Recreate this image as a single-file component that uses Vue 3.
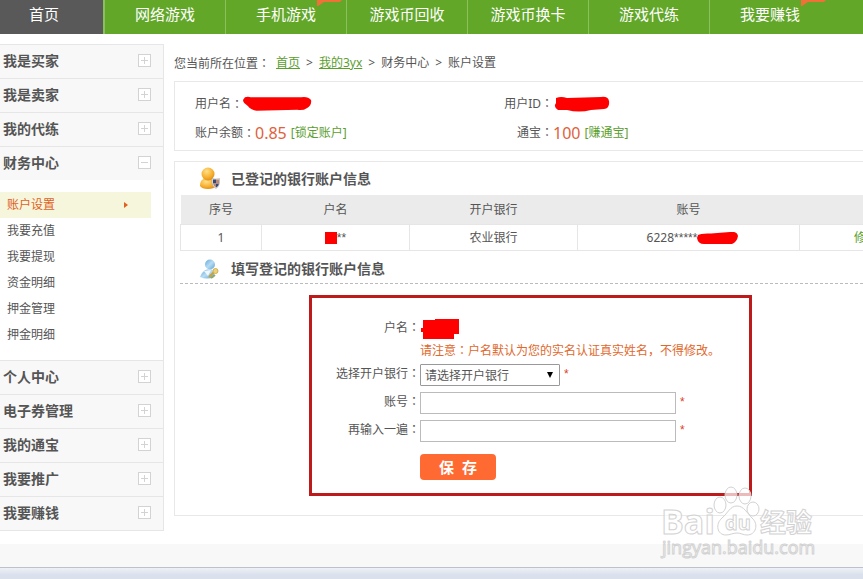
<script setup>
import { ref } from 'vue'

const nav = [
  { name: '网络游戏' },
  { name: '手机游戏', hot: true },
  { name: '游戏币回收' },
  { name: '游戏币换卡' },
  { name: '游戏代练' },
  { name: '我要赚钱', hot: true },
]

const menu = ref([
  { name: '我是买家' },
  { name: '我是卖家' },
  { name: '我的代练' },
  {
    name: '财务中心',
    open: true,
    children: ['账户设置', '我要充值', '我要提现', '资金明细', '押金管理', '押金明细'],
  },
  { name: '个人中心' },
  { name: '电子券管理' },
  { name: '我的通宝' },
  { name: '我要推广' },
  { name: '我要赚钱' },
])
const current = ref('账户设置')

const bank = ref('')
const account = ref('')
const account2 = ref('')
</script>

<template>
  <div class="page">
    <nav class="nav">
      <a href="#" class="nav-home">首页</a>
      <a v-for="n in nav" :key="n.name" href="#" class="nav-item">
        {{ n.name }}
        <svg v-if="n.hot" class="hot" width="25" height="6" viewBox="0 0 25 6">
          <path d="M0 0H25L23 2H7L1 6H0Z" fill="#f0703a" />
        </svg>
      </a>
    </nav>

    <div class="main">
      <aside class="side">
        <div v-for="m in menu" :key="m.name" class="group">
          <button type="button" class="group-title" @click="m.open = !m.open">
            <span>{{ m.name }}</span>
            <svg width="13" height="13" viewBox="0 0 13 13" fill="none" stroke="#d3d3d3">
              <rect x="0.5" y="0.5" width="12" height="12" fill="#fff" />
              <path d="M3 6.5H10" />
              <path v-if="!m.open" d="M6.5 3V10" />
            </svg>
          </button>
          <ul v-if="m.open && m.children" class="sub">
            <li v-for="c in m.children" :key="c">
              <a href="#" :class="{ on: c === current }" @click.prevent="current = c">
                {{ c }}
                <svg v-if="c === current" width="4" height="6" viewBox="0 0 4 6">
                  <path d="M0 0L4 3L0 6Z" fill="#e0601f" />
                </svg>
              </a>
            </li>
          </ul>
        </div>
      </aside>

      <div class="content">
        <div class="crumbs">
          <span>您当前所在位置<span class="colon">：</span></span>
          <a href="#">首页</a>
          <span>&gt;</span>
          <a href="#">我的3yx</a>
          <span>&gt;</span>
          <span>财务中心</span>
          <span>&gt;</span>
          <span>账户设置</span>
        </div>

        <div class="box info">
          <div class="info-left">
            <p>
              用户名<span class="colon">：</span>
              <svg width="69" height="16" viewBox="0 0 71 16">
                <path d="M2 1Q5 0 8 1L60 1Q67 0 70 4Q71 9 66 12Q62 15 56 14L14 15Q8 14 5 10Q0 7 0 4Z" fill="#f00" />
              </svg>
            </p>
            <p>
              账户余额<span class="colon">：</span><strong>0.85</strong>
              <a href="#">[锁定账户]</a>
            </p>
          </div>
          <div class="info-right">
            <p>
              <span class="k">用户ID<span class="colon">：</span></span>
              <svg width="57" height="16" viewBox="0 0 57 16">
                <path d="M3 2Q8 0 14 2L48 1Q55 0 56 5Q57 12 51 13L38 14Q26 17 14 14L5 14Q0 11 3 7Z" fill="#f00" />
              </svg>
            </p>
            <p>
              <span class="k">通宝<span class="colon">：</span></span><strong>100</strong>
              <a href="#">[赚通宝]</a>
            </p>
          </div>
        </div>

        <div class="box panel">
          <h2>
            <svg width="22" height="23" viewBox="0 0 22 23">
              <defs>
                <radialGradient id="gold" cx="0.4" cy="0.3" r="0.8">
                  <stop offset="0" stop-color="#ffe08a" />
                  <stop offset="0.6" stop-color="#f6ae2c" />
                  <stop offset="1" stop-color="#d98512" />
                </radialGradient>
              </defs>
              <path d="M1 19Q1 12 6 11.500H12Q17 13 17 19Q15 22 9 22Q3 22 1 19Z" fill="url(#gold)" />
              <circle cx="9" cy="7" r="6.500" fill="url(#gold)" />
              <path d="M13 11.500Q17 12.500 20.500 11.500V16Q20 20 17 21.500Q13.500 20 13 16Z" fill="#e6e6ea" stroke="#a59b96" stroke-width="0.500" />
              <path d="M14 12.500H17V16.500H14ZM17 16.500H20Q19.500 19.500 17 20.500Z" fill="#38486e" />
              <path d="M17 12.500H20V16.500H17ZM14 16.500H17V20.500Q14.500 19 14 16.500Z" fill="#b98a78" />
            </svg>
            已登记的银行账户信息
          </h2>
          <table>
            <thead>
              <tr>
                <th class="c1">序号</th>
                <th class="c2">户名</th>
                <th class="c3">开户银行</th>
                <th class="c4">账号</th>
                <th></th>
              </tr>
            </thead>
            <tbody>
              <tr>
                <td>1</td>
                <td>
                  <svg width="12" height="12" viewBox="0 0 12 12"><rect width="12" height="12" fill="#f00" /></svg><span class="stars">**</span>
                </td>
                <td>农业银行</td>
                <td class="no">
                  6228<span class="stars">*****</span><svg width="41" height="13" viewBox="0 0 41 13">
                    <path d="M1 3Q4 1 14 1.500L33 0Q40 -1 41 4Q40 10 35 12H7Q1 12 0 6Z" fill="#f00" />
                  </svg>
                </td>
                <td class="op"><a href="#">修改</a></td>
              </tr>
            </tbody>
          </table>

          <h2 class="line">
            <svg width="22" height="23" viewBox="0 0 22 23">
              <defs>
                <linearGradient id="blue" x1="0" y1="0" x2="1" y2="1">
                  <stop offset="0" stop-color="#5fa9dc" />
                  <stop offset="0.5" stop-color="#b8dcf3" />
                  <stop offset="1" stop-color="#5b9fd2" />
                </linearGradient>
              </defs>
              <path d="M1 19Q3 13 8 11.500H13Q16 14 15 19Q8 22 1 19Z" fill="url(#blue)" />
              <circle cx="11" cy="6.500" r="5" fill="url(#blue)" />
              <path d="M5 13L9 18L12 12Z" fill="#eef7fc" />
              <path d="M10 19L15 14" stroke="#c9a23a" stroke-width="2" />
              <circle cx="16.500" cy="13" r="2.500" fill="#ecd27a" stroke="#d3ae50" />
              <path d="M12 20L16 17" stroke="#8fa867" stroke-width="2" />
            </svg>
            填写登记的银行账户信息
          </h2>

          <form class="form" @submit.prevent>
            <span class="label mid">户名<span class="colon">：</span></span>
            <div class="name">
              <svg width="38" height="20" viewBox="0 0 38 20">
                <path d="M2 1H14V0H38V15H33V20H2V13H0V9H2Z" fill="#f00" />
              </svg>
            </div>
            <p class="tip">请注意<span class="colon">：</span>户名默认为您的实名认证真实姓名，不得修改。</p>

            <label for="bank" class="label">选择开户银行<span class="colon">：</span></label>
            <div class="field">
              <div class="select">
                <select id="bank" v-model="bank">
                  <option value="">请选择开户银行</option>
                  <option value="abc">农业银行</option>
                </select>
                <svg width="6" height="6" viewBox="0 0 6 6"><path d="M0 0H6L3 6Z" fill="#000" /></svg>
              </div>
              <em>*</em>
            </div>

            <label for="account" class="label">账号<span class="colon">：</span></label>
            <div class="field">
              <input id="account" v-model="account" type="text">
              <em>*</em>
            </div>

            <label for="account2" class="label">再输入一遍<span class="colon">：</span></label>
            <div class="field">
              <input id="account2" v-model="account2" type="text">
              <em>*</em>
            </div>

            <button type="submit" class="save">保&nbsp; 存</button>
          </form>
        </div>
      </div>
    </div>

    <footer class="foot"></footer>
    <div class="status"></div>

    <svg class="mark" width="160" height="80" viewBox="0 0 160 80">
      <g fill="#fff" fill-opacity="0.7" stroke="#d2d2d2" stroke-width="1">
        <ellipse cx="61" cy="20" rx="6" ry="8" />
        <ellipse cx="72" cy="10" rx="6" ry="8" />
        <ellipse cx="86" cy="11" rx="6" ry="8" />
        <ellipse cx="94" cy="24" rx="6" ry="7" />
        <path d="M78 21C85 21 88 28 93 33C100 39 97 50 88 50C84 50 82 48 78 48C74 48 71 50 67 50C58 50 56 39 63 33C69 28 71 21 78 21Z" />
        <text x="2" y="49" class="latin big">Bai</text>
        <text x="66" y="45" class="latin du">du</text>
        <text x="101" y="47" class="cn">经验</text>
        <text x="3" y="69" class="latin small">jingyan.baidu.com</text>
      </g>
    </svg>
  </div>
</template>

<style>
body {
  margin: 0;
  background: #fff;
}
</style>

<style scoped>
.page {
  position: relative;
  overflow: hidden;
  font: 12px/20px "Noto Sans", "Noto Sans CJK SC", sans-serif;
  color: #555;
}

a {
  color: #5a9e2d;
  text-decoration: none;
}

p, h2, ul {
  margin: 0;
  padding: 0;
}

/* centred colon */
.colon {
  font-family: "Noto Sans CJK TC", sans-serif;
}

.stars {
  font-family: "Liberation Sans", Arial, sans-serif;
}

.nav {
  display: flex;
  height: 34px;
  background: #62a728;
  font-size: 15px;
  line-height: 28px;
}

.nav a {
  color: #fff;
  text-align: center;
  box-sizing: border-box;
}

.nav-home {
  width: 105px;
  padding-right: 15px;
  background: #595959;
  border-right: 2px solid #8bc05f;
}

.nav-item {
  position: relative;
  width: 121px;
  border-right: 1px solid #8bc05f;
}

.nav-item:last-child {
  border-right-color: transparent;
}

.hot {
  position: absolute;
  top: 0;
  left: 91px;
}

.main {
  display: flex;
  align-items: flex-start;
  gap: 10px;
  padding-top: 10px;
}

.side {
  flex: none;
  width: 163px;
  border: 1px solid #e6e6e6;
  border-width: 0 1px 1px 0;
}

.group-title {
  display: flex;
  align-items: center;
  justify-content: space-between;
  width: 100%;
  height: 34px;
  padding: 0 12px 2px 3px;
  border: 0;
  border-top: 1px solid #e6e6e6;
  background: #f8f8f8;
  font: bold 14px/30px "Noto Sans", "Noto Sans CJK SC", sans-serif;
  color: #555;
}

.sub {
  padding: 12px 12px 12px 0;
  list-style: none;
}

.sub a {
  display: flex;
  align-items: center;
  justify-content: space-between;
  padding: 0 23px 0 7px;
  line-height: 26px;
  color: #555;
}

.sub a.on {
  background: #f6f6dc;
  color: #e0601f;
}

.content {
  flex: 1 0 760px;
}

.crumbs {
  display: flex;
  gap: 6px;
  height: 37px;
  line-height: 38px;
}

.crumbs a {
  text-decoration: underline;
}

.box {
  border: 1px solid #e8e8e8;
}

.info {
  display: flex;
  margin-bottom: 10px;
  padding: 7px 20px 3px;
}

.info p {
  display: flex;
  align-items: center;
  height: 29px;
}

.info-left {
  width: 298px;
}

.info-right .k {
  width: 60px;
  text-align: right;
}

.info strong {
  margin-right: 4px;
  font-size: 16px;
  font-weight: normal;
  color: #e0623c;
}

.panel {
  padding: 0 5px 19px;
}

h2 {
  display: flex;
  align-items: center;
  gap: 10px;
  height: 33px;
  padding-left: 19px;
  font-size: 14px;
}

h2.line {
  height: 28px;
  padding-top: 4px;
  border-bottom: 1px dashed #bbb;
}

table {
  width: 100%;
  border-collapse: collapse;
  table-layout: fixed;
  text-align: center;
}

th {
  height: 29px;
  padding: 0;
  background: #ebebeb;
  font-weight: normal;
}

td {
  height: 25px;
  padding: 0;
  border: 1px solid #e6e6e6;
}

td svg {
  vertical-align: middle;
}

td.no {
  padding-left: 8px;
}

td.op {
  padding-left: 54px;
  text-align: left;
}

.c1 { width: 81px; }
.c2 { width: 148px; }
.c3 { width: 168px; }
.c4 { width: 222px; }

.form {
  display: grid;
  grid-template-columns: 108px 1fr;
  row-gap: 6px;
  box-sizing: border-box;
  width: 443px;
  margin: 11px 0 0 129px;
  padding: 18px 0 13px;
  border: 3px solid #bd1a1c;
}

.label {
  line-height: 18px;
  text-align: right;
}

.label.mid {
  align-self: center;
}

.name {
  display: flex;
  padding: 3px 0 0 1px;
}

.tip {
  grid-column: 2;
  margin: -5px 0 -3px;
  white-space: nowrap;
  color: #e0682c;
}

.field {
  display: flex;
  gap: 4px;
}

.field em {
  font-family: "Liberation Sans", Arial, sans-serif;
  font-style: normal;
  line-height: 20px;
  color: #e0402c;
}

.select {
  position: relative;
  width: 140px;
}

.select svg {
  position: absolute;
  top: 8px;
  right: 7px;
}

select,
input {
  box-sizing: border-box;
  height: 22px;
  border: 1px solid #bbb;
  background: #fff;
  font: 12px "Noto Sans", "Noto Sans CJK SC", sans-serif;
  color: #555;
}

select {
  width: 100%;
  padding: 0 4px;
  border-color: #999;
  border-radius: 1px;
  appearance: none;
}

input {
  width: 256px;
  padding: 0 4px;
}

.save {
  grid-column: 2;
  width: 76px;
  height: 26px;
  margin-top: 6px;
  padding: 0;
  border: 0;
  border-radius: 4px;
  background: #ff6a33;
  font: bold 15px/24px "Noto Sans", "Noto Sans CJK SC", sans-serif;
  color: #fff;
}

.foot {
  height: 23px;
  margin-top: 13px;
  background: #f8f8f8;
}

.status {
  height: 11px;
  border-top: 1px solid #bcc2cc;
  background: linear-gradient(#eef1f7, #dbe1ec 60%);
}

.mark {
  position: absolute;
  right: 44px;
  bottom: 14px;
}

.latin {
  font-family: "Open Sans", sans-serif;
}

.big {
  font-size: 34px;
  font-weight: bold;
}

.du {
  font-size: 20px;
  font-weight: bold;
}

.small {
  font-size: 18px;
}

.cn {
  font-family: "Noto Sans CJK SC", sans-serif;
  font-size: 26px;
  font-weight: bold;
}
</style>
